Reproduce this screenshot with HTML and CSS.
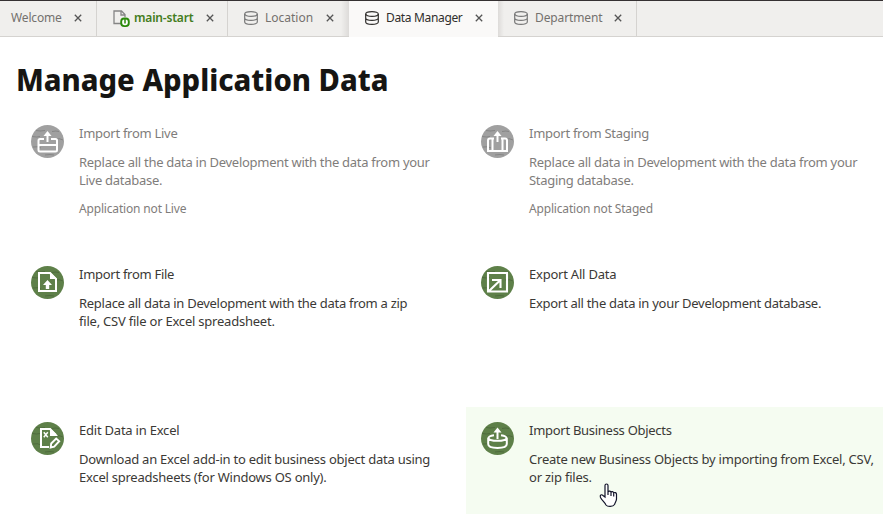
FILE: index.html
```html
<!DOCTYPE html>
<html lang="en">
<head>
<meta charset="utf-8">
<title>Manage Application Data</title>
<link rel="stylesheet" href="styles.css">
</head>
<body>
<svg class="defs" width="0" height="0" aria-hidden="true">
  <symbol id="db" viewBox="0 0 14 14"><g fill="none" stroke="currentColor" stroke-width="1.2"><ellipse cx="7" cy="3" rx="6.3" ry="2.4"/><path d="M.7 3v8c0 1.500 2.800 2.400 6.300 2.400s6.300-.9 6.300-2.400V3M.7 7c0 1.500 2.800 2.400 6.300 2.400s6.300-.9 6.300-2.400"/></g></symbol>
  <symbol id="close" viewBox="0 0 8 8"><path d="M.8.8l6.400 6.400M7.200.8L.8 7.200" fill="none" stroke="currentColor" stroke-width="1.300"/></symbol>
  <symbol id="disc" viewBox="0 0 33 33"><circle cx="16.5" cy="16.5" r="16.5" fill="currentColor"/><path d="M5 5.500q4 1 9 0M21 6.500q4-1 7 0M1 11.500q5 1 8 0M24 14q5-1 8 1M2 22q5-1 8 1M14 30q5-1 9 0" fill="none" stroke="#000" stroke-opacity=".17"/></symbol>
</svg>
<nav class="tabs">
  <div class="tab welcome"><span>Welcome</span><svg class="x"><use href="#close"/></svg></div>
  <div class="tab main"><svg class="page" viewBox="0 0 17 18"><path d="M8 13.500H1V1h7.500l3.500 3.500V7M8 1v4h4" fill="none" stroke="#858585" stroke-width="1.300"/><rect x="8.200" y="8.500" width="7.600" height="7.600" rx="3" fill="#fff" stroke="#2b8a0b" stroke-width="1.900"/><path d="M12 8v5.500" stroke="#2b8a0b" stroke-width="1.500"/></svg><span>main-start</span><svg class="x"><use href="#close"/></svg></div>
  <div class="tab location"><svg class="db"><use href="#db"/></svg><span>Location</span><svg class="x"><use href="#close"/></svg></div>
  <div class="tab manager"><svg class="db"><use href="#db"/></svg><span>Data Manager</span><svg class="x"><use href="#close"/></svg></div>
  <div class="tab department"><svg class="db"><use href="#db"/></svg><span>Department</span><svg class="x"><use href="#close"/></svg></div>
</nav>
<main>
<h1><span>Manage Application Data</span></h1>
<section class="cards">
  <article class="card off">
    <svg class="icon" viewBox="0 0 33 33"><use href="#disc"/><g fill="none" stroke="#fff" stroke-width="2"><path d="M13 14H9q-1.500 0-1.500 1.500V25q0 1.500 1.500 1.500h15.500q1.500 0 1.500-1.500v-9.500q0-1.500-1.500-1.500H20M7.500 20H26"/><path d="M16.500 17V9"/></g><path d="M12.500 11l4-5 4 5z" fill="#fff"/></svg>
    <div><h2>Import from Live</h2><p>Replace all the data in Development with the data from your<br>Live database.</p><small>Application not Live</small></div>
  </article>
  <article class="card off">
    <svg class="icon" viewBox="0 0 33 33"><use href="#disc"/><g fill="none" stroke="#fff" stroke-width="2"><path d="M13 13.500H9q-2 0-2 2V26h19V15.500q0-2-2-2h-4M11.500 13.500v12.500M21.500 13.500v12.500"/><path d="M16.500 17V9"/></g><path d="M12.500 11l4-5 4 5z" fill="#fff"/></svg>
    <div><h2>Import from Staging</h2><p>Replace all data in Development with the data from your<br>Staging database.</p><small>Application not Staged</small></div>
  </article>
  <article class="card">
    <svg class="icon" viewBox="0 0 33 33"><use href="#disc"/><path d="M8 7h11l6 6v12H8z" fill="none" stroke="#fff" stroke-width="2"/><path d="M19 6l7 7h-7zM12 19l4.500-5 4.500 5h-2.800v4h-3.400v-4z" fill="#fff"/></svg>
    <div><h2>Import from File</h2><p>Replace all data in Development with the data from a zip<br><span class="loose">file, CSV file or Excel spreadsheet.</span></p></div>
  </article>
  <article class="card">
    <svg class="icon" viewBox="0 0 33 33"><use href="#disc"/><path d="M7 7h19v18.500H7zM11 14h8.500v8M19.500 14L8 25" fill="none" stroke="#fff" stroke-width="2.100"/></svg>
    <div><h2 class="loose">Export All Data</h2><p>Export all the data in your Development database.</p></div>
  </article>
  <article class="card">
    <svg class="icon" viewBox="0 0 33 33"><use href="#disc"/><path d="M18 25H10V7h9l6 6" fill="none" stroke="#fff" stroke-width="2"/><path d="M19 6l8 8h-8z" fill="#fff"/><path d="M12.800 10.200l4 5M16.800 10.200l-4 5" stroke="#fff" stroke-width="1.500"/><path d="M20.200 21.500l5-5 3 2.700-5 5.500-3.500.8z" fill="none" stroke="#fff" stroke-width="1.900"/></svg>
    <div><h2 class="loose">Edit Data in Excel</h2><p class="download">Download an Excel add-in to edit business object data using<br>Excel spreadsheets (for Windows OS only).</p></div>
  </article>
  <article class="card hover">
    <svg class="icon" viewBox="0 0 33 33"><use href="#disc"/><g fill="none" stroke="#fff" stroke-width="2"><path d="M13 13.300c-8 .8-8 5.500 3.500 5.500s11.500-4.700 3.500-5.500M7.200 16v6c0 5.200 18.600 5.200 18.600 0v-6"/><path d="M16.500 17V9"/></g><path d="M12.500 10.500l4-5 4 5z" fill="#fff"/></svg>
    <div><h2>Import Business Objects</h2><p class="loose">Create new Business Objects by importing from Excel, CSV,<br>or zip files.</p></div>
    <svg class="cursor" viewBox="0 0 19 25"><path d="M6 14V2.500C6 .5 9 .5 9 2.500V9c.5-1.500 3-1 3 .3.500-1.200 2.500-.7 2.700.7.800-1 2.800-.3 2.800 1.200V16c0 2-1.500 3.500-2 5.500-1.500 2.500-7 2.500-8.500.5C6 19.500 3 17.500 1.500 14.500.5 12 2.500 11 4 12.500zM9 8v4M12 9V13M14.700 10V13.500" fill="#fff" stroke="#111329" stroke-width="1.200"/></svg>
  </article>
</section>
</main>
</body>
</html>
```
FILE: styles.css
```css
* { box-sizing: border-box; }
body { margin: 0; width: 883px; height: 514px; overflow: hidden; background: #fff; color: #3b3936; font: 13px/18px "Noto Sans", sans-serif; }
.defs { display: none; }
.tabs { display: flex; height: 37px; background: #f0efed; border-top: 1px solid #353132; font-size: 12px; color: #74716e; box-shadow: inset 0 -1px #d5d3d0; }
.tab { display: flex; align-items: center; height: 36px; border-right: 1px solid #d5d3d0; padding: 0 14px 3px 16px; white-space: nowrap; }
.tab .x { width: 8px; height: 8px; margin: 1px 0 0 auto; color: #555; }
.db { width: 14px; height: 14px; margin-right: 7px; color: #777; }
.page { width: 17px; height: 18px; margin: 2px 4px 0 0; }
.welcome { width: 97px; padding: 0 14px 3px 11px; letter-spacing: -.15px; }
.main { width: 131px; padding-right: 13px; color: #437c20; font-weight: 600; letter-spacing: -.2px; }
.location { width: 121px; border-right: 0; background: linear-gradient(to left, #dddbd9, transparent 8px) 0 0 / 100% 35px no-repeat; }
.location .x { margin-right: 1px; }
.manager { width: 149px; border-right: 0; background: #faf9f8; color: #302e2c; letter-spacing: -.34px; }
.manager .db { color: #302e2c; }
.manager .x { margin-right: 1px; }
.department { width: 139px; letter-spacing: -.12px; background: linear-gradient(to right, #dddbd9, transparent 6px) 0 0 / 100% 35px no-repeat; }
h1 { margin: 20px 0 9px 16px; font-size: 31px; line-height: 44px; color: #161513; font-weight: 800; }
h1 span { display: inline-block; transform: scaleX(.94); transform-origin: left; }
.cards { display: grid; grid-template-columns: 450px 417px; grid-template-rows: 141px 156px 107px; margin-left: 16px; }
.card { display: flex; padding: 15px 0 0 15px; position: relative; letter-spacing: -.28px; }
.icon { width: 33px; height: 33px; margin-right: 15px; color: #5e8049; flex: none; }
.card > div { margin-top: -1px; }
h2, p { margin: 0; font: inherit; }
p { margin-top: 11px; white-space: nowrap; }
.loose { letter-spacing: -.22px; }
.download { letter-spacing: -.235px; }
.off { color: #7f7d7b; }
.off .icon { color: #a0a0a0; }
.hover { background: #f5fcf1; }
small { display: block; margin-top: 11px; font-size: 12px; letter-spacing: -.17px; }
.cursor { position: absolute; width: 19px; height: 25px; left: 133px; top: 76px; }
```
